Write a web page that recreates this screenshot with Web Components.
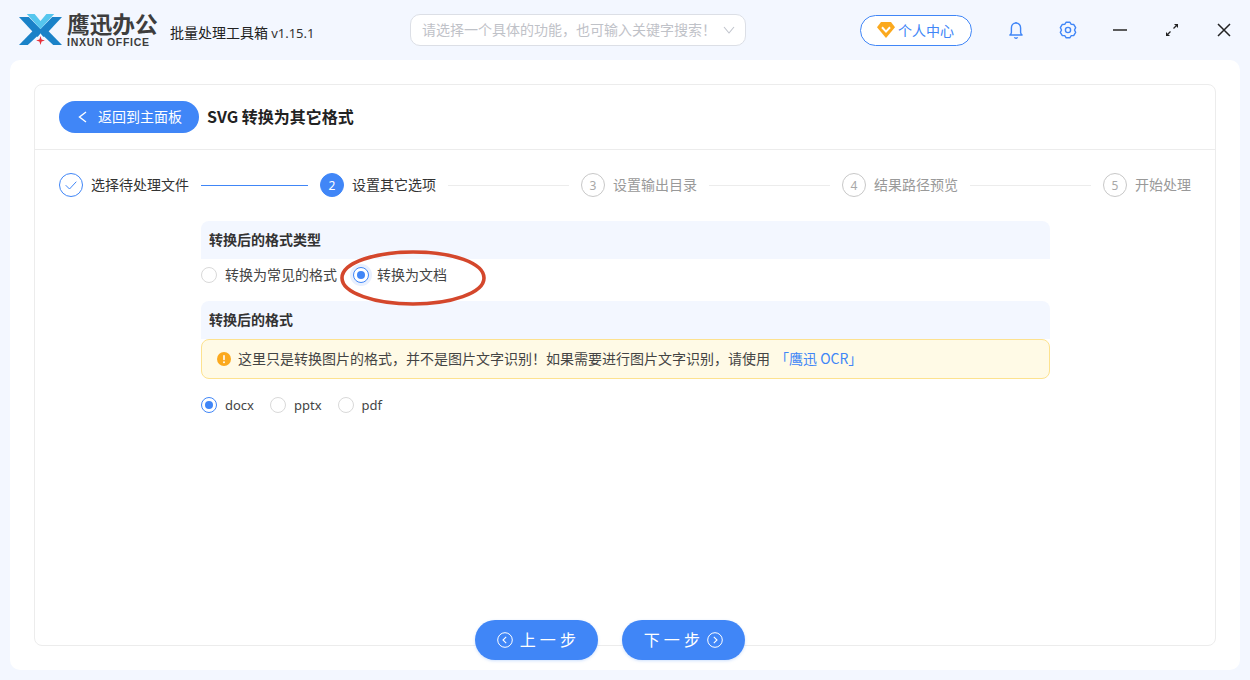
<!DOCTYPE html>
<html lang="zh">
<head>
<meta charset="utf-8">
<title>SVG 转换为其它格式</title>
<style>
  html, body { margin: 0; height: 100%; background: #f3f7ff; overflow: hidden; }
  body { font-family: "Noto Sans CJK SC", "Noto Sans", sans-serif; font-size: 13.5px; color: #333; }
</style>
</head>
<body>
<inxun-app>
  <inxun-titlebar slot="top"></inxun-titlebar>

  <inxun-page-head title-text="SVG 转换为其它格式" back-text="返回到主面板" slot="head"></inxun-page-head>

  <inxun-steps slot="head">
    <inxun-step state="done" label="选择待处理文件"></inxun-step>
    <inxun-step state="active" n="2" label="设置其它选项" line="107"></inxun-step>
    <inxun-step n="3" label="设置输出目录" line="121"></inxun-step>
    <inxun-step n="4" label="结果路径预览" line="121"></inxun-step>
    <inxun-step n="5" label="开始处理" line="121"></inxun-step>
  </inxun-steps>

  <inxun-form>
    <inxun-section-title>转换后的格式类型</inxun-section-title>
    <inxun-radio-row style="height:32px;margin-bottom:10px">
      <inxun-radio cjk>转换为常见的格式</inxun-radio>
      <inxun-radio cjk checked halo>转换为文档</inxun-radio>
      <inxun-ring></inxun-ring>
    </inxun-radio-row>
    <inxun-section-title>转换后的格式</inxun-section-title>
    <inxun-notice>这里只是转换图片的格式，并不是图片文字识别！如果需要进行图片文字识别，请使用<a slot="link">「鹰迅 OCR」</a></inxun-notice>
    <inxun-radio-row style="height:32px;margin-top:10px">
      <inxun-radio checked>docx</inxun-radio>
      <inxun-radio>pptx</inxun-radio>
      <inxun-radio>pdf</inxun-radio>
    </inxun-radio-row>
  </inxun-form>

  <inxun-pill dir="prev" slot="foot">上 一 步</inxun-pill>
  <inxun-pill dir="next" slot="foot">下 一 步</inxun-pill>
</inxun-app>

<script>
// shared blue of the app
const BLUE = '#4086f7';

function shadow(el, html) {
  const t = document.createElement('template');
  t.innerHTML = html;
  el.attachShadow({ mode: 'open' });
  el.shadowRoot.appendChild(t.content.cloneNode(true));
}

// six toothed gear outline, centred on 12,12
function gearPath() {
  const pts = [];
  for (let i = 0; i < 6; i++) {
    const a = i * 60 - 90;
    [[a - 13, 8], [a + 13, 8], [a + 30, 6.5]].forEach(([deg, r]) => {
      const rad = deg * Math.PI / 180;
      pts.push((12 + r * Math.cos(rad)).toFixed(2) + ' ' + (12 + r * Math.sin(rad)).toFixed(2));
    });
  }
  return 'M' + pts.join('L') + 'z';
}

class InxunApp extends HTMLElement {
  constructor() {
    super();
    shadow(this, `
    <style>
    :host { display: flex; flex-direction: column; width: 1250px; height: 680px; }
    .panel {
      flex: 1;
      margin: 0 10px 10px;
      padding: 24px 24px 10px;
      background: #fff;
      border-radius: 10px;
      display: flex;
      flex-direction: column;
      min-height: 0;
    }
    .card {
      flex: 1;
      border: 1px solid #ececec;
      border-radius: 8px;
      box-sizing: border-box;
      min-height: 0;
    }
    .foot {
      position: relative;
      height: 40px;
      margin-top: -26px;
      padding-left: 441px;
      display: flex;
      gap: 24px;
    }
    </style>
    <slot name="top"></slot>
    <div class="panel">
      <div class="card">
        <slot name="head"></slot>
        <slot></slot>
      </div>
      <div class="foot"><slot name="foot"></slot></div>
    </div>`);
  }
}

class InxunTitlebar extends HTMLElement {
  constructor() {
    super();
    shadow(this, `
    <style>
    :host { display: flex; align-items: center; height: 60px; flex: none; position: relative; }
    .logo { margin-left: 18px; width: 45px; height: 34px; flex: none; }
    .brand { margin-left: 4px; width: 95px; display: flex; flex-direction: column; margin-top: 1px; }
    .brand b { font-family: "Liberation Sans", "Noto Sans CJK SC", sans-serif; font-size: 22.7px; line-height: 24px; font-weight: 700; color: #3d3d3d; white-space: nowrap; }
    .brand i { font-style: normal; font-family: "Liberation Sans", sans-serif; font-size: 10.5px; line-height: 12px; margin-top: -1.5px; font-weight: 700; color: #3d3d3d; letter-spacing: 0.72px; white-space: nowrap; }
    .ver { margin-left: 8px; margin-top: 4px; font-size: 14px; color: #222; white-space: nowrap; width: 150px; }
    .ver span { font-family: "Noto Sans", sans-serif; font-size: 13px; color: #333; }
    .search {
      margin-left: 90px;
      width: 336px; height: 32px;
      box-sizing: border-box;
      border: 1px solid #dcdfe6;
      border-radius: 10px;
      background: #fff;
      display: flex; align-items: center;
      padding-left: 11px;
      color: #bfc2c8;
      font-size: 14px;
      white-space: nowrap;
    }
    .search span { margin-bottom: 2px; }
    .search svg { margin-left: 7px; flex: none; }
    .vip {
      margin-left: 114px;
      width: 112px; height: 31px;
      box-sizing: border-box;
      border: 1px solid ${BLUE};
      border-radius: 16px;
      background: #fff;
      display: flex; align-items: center;
      padding-left: 16px; gap: 3px;
      color: ${BLUE};
      font-size: 14px;
      white-space: nowrap;
    }
    .ico { position: absolute; top: 18px; width: 24px; height: 24px; }
    </style>
    <svg class="logo" viewBox="0 0 46 34" preserveAspectRatio="none">
      <path d="M1 4h10l14 14-5 6z" fill="#1a82c8"/>
      <path d="M45 4H35L21 18l5 6z" fill="#1a82c8"/>
      <path d="M9 1h8l6 7 6-7h8L23 16z" fill="#55c6ee"/>
      <path d="M1 32 L17 16l5 5L10 32z" fill="#1a82c8"/>
      <path d="M45 32 L29 16l-5 5L36 32z" fill="#1a82c8"/>
      <path d="M23 23l1.1 3.4 3.4 1.1-3.4 1.1L23 32l-1.1-3.4-3.4-1.1 3.4-1.1z" fill="#e8303a"/>
    </svg>
    <div class="brand"><b>鹰迅办公</b><i>INXUN OFFICE</i></div>
    <div class="ver">批量处理工具箱 <span>v1.15.1</span></div>
    <div class="search"><span>请选择一个具体的功能，也可输入关键字搜索！</span>
      <svg width="12" height="8" viewBox="0 0 12 8"><path d="M1 1l5 6 5-6" fill="none" stroke="#c0c4cc" stroke-width="1.1"/></svg>
    </div>
    <div class="vip">
      <svg width="18" height="16" viewBox="0 0 18 16"><path d="M4 0h10l4 5.3L9 16 0 5.3z" fill="#fba91e"/><path d="M5 5.3 9 9.6l4-4.3" fill="none" stroke="#fff" stroke-width="2"/></svg>
      个人中心
    </div>
    <svg class="ico" style="left:1004px" viewBox="0 0 24 24" fill="none" stroke="${BLUE}" stroke-width="1.4" stroke-linejoin="round"><path d="M12 5c-3 0-4.6 2.4-4.6 5v4.5c0 1-.9 2-1.5 2.5h12.2c-.6-.5-1.5-1.5-1.5-2.5V10c0-2.6-1.6-5-4.6-5z"/><path d="M10.4 19.3a1.8 1.8 0 0 0 3.2 0"/><path d="M12 4v1"/></svg>
    <svg class="ico" style="left:1056px" viewBox="0 0 24 24" fill="none" stroke="${BLUE}" stroke-width="1.4" stroke-linejoin="round"><path d="${gearPath()}"/><circle cx="12" cy="12" r="2.6"/></svg>
    <svg class="ico" style="left:1108px" viewBox="0 0 24 24"><path d="M5 12h14" stroke="#333" stroke-width="1.6"/></svg>
    <svg class="ico" style="left:1160px" viewBox="0 0 24 24" fill="#222"><path d="M13.5 10.5 16 8" stroke="#222" stroke-width="1.3"/><path d="M14 6h4v4z"/><path d="M10.5 13.5 8 16" stroke="#222" stroke-width="1.3"/><path d="M6 14v4h4z"/></svg>
    <svg class="ico" style="left:1212px" viewBox="0 0 24 24"><path d="M6 6l12 12M18 6 6 18" stroke="#222" stroke-width="1.5"/></svg>`);
  }
}

class InxunPageHead extends HTMLElement {
  constructor() {
    super();
    shadow(this, `
    <style>
    :host { display: flex; align-items: center; height: 64px; padding-left: 24px; border-bottom: 1px solid #ececec; }
    .back {
      width: 140px; height: 32px;
      box-sizing: border-box;
      border-radius: 16px;
      background: ${BLUE};
      color: #fff;
      font-size: 14px;
      display: flex; align-items: center;
      padding-left: 19px; gap: 11px;
      white-space: nowrap;
    }
    .back span { margin-bottom: 2px; }
    h1 { margin: 0 0 2px 8px; font-size: 16px; font-weight: 700; color: #222; white-space: nowrap; }
    </style>
    <div class="back">
      <svg width="9" height="12" viewBox="0 0 9 12"><path d="M8 1 1.5 6 8 11" fill="none" stroke="#fff" stroke-width="1.4"/></svg>
      <span id="b"></span>
    </div>
    <h1 id="t"></h1>`);
  }
  connectedCallback() {
    this.shadowRoot.getElementById('b').textContent = this.getAttribute('back-text');
    this.shadowRoot.getElementById('t').textContent = this.getAttribute('title-text');
  }
}

class InxunSteps extends HTMLElement {
  constructor() {
    super();
    shadow(this, `
    <style>
    :host { display: flex; align-items: center; height: 70px; padding: 0 24px; box-sizing: border-box; }
    </style>
    <slot></slot>`);
  }
}

class InxunStep extends HTMLElement {
  constructor() {
    super();
    shadow(this, `
    <style>
    :host { display: contents; }
    .line { height: 1px; min-width: 0; margin: 0 12px; background: #ececec; }
    .circle {
      width: 24px; height: 24px; flex: none;
      box-sizing: border-box;
      border-radius: 50%;
      border: 1px solid #c8c8c8;
      color: #a8a8a8;
      font-family: "Noto Sans", sans-serif;
      font-size: 12px;
      display: flex; align-items: center; justify-content: center;
    }
    .label { margin: 0 0 2px 8px; font-size: 14px; color: #999; white-space: nowrap; }
    :host([state="active"]) .circle { background: ${BLUE}; border-color: ${BLUE}; color: #fff; }
    :host([state="done"]) .circle { border-color: ${BLUE}; }
    :host([state="active"]) .label, :host([state="done"]) .label { color: #333; }
    :host([state="active"]) .line { background: ${BLUE}; }
    </style>
    <div class="line" id="l"></div>
    <div class="circle" id="c"></div>
    <div class="label" id="t"></div>`);
  }
  connectedCallback() {
    const root = this.shadowRoot;
    const line = root.getElementById('l');
    if (this.hasAttribute('line')) line.style.flex = this.getAttribute('line') + ' 1 0';
    else line.remove();
    root.getElementById('t').textContent = this.getAttribute('label');
    const c = root.getElementById('c');
    if (this.getAttribute('state') === 'done') {
      c.innerHTML = '<svg width="12" height="9" viewBox="0 0 12 9"><path d="M.7 4.2l3.8 3.8L11.3.7" fill="none" stroke="' + BLUE + '" stroke-width="1"/></svg>';
    } else {
      c.textContent = this.getAttribute('n');
    }
  }
}

class InxunForm extends HTMLElement {
  constructor() {
    super();
    shadow(this, `
    <style>
    :host { display: block; width: 849px; margin: 1px 0 0 166px; }
    </style>
    <slot></slot>`);
  }
}

class InxunSectionTitle extends HTMLElement {
  constructor() {
    super();
    shadow(this, `
    <style>
    :host {
      display: flex; align-items: center;
      height: 38px;
      box-sizing: border-box;
      padding: 0 0 3px 8px;
      background: #f3f7ff;
      border-radius: 8px 8px 0 0;
      font-size: 14px; font-weight: 700; color: #333;
    }
    </style>
    <slot></slot>`);
  }
}

class InxunRadioRow extends HTMLElement {
  constructor() {
    super();
    shadow(this, `
    <style>
    :host { display: flex; align-items: center; gap: 16px; position: relative; }
    </style>
    <slot></slot>`);
  }
}

class InxunRadio extends HTMLElement {
  constructor() {
    super();
    shadow(this, `
    <style>
    :host { display: inline-flex; align-items: center; gap: 8px; color: #444; white-space: nowrap; }
    .dot {
      width: 16px; height: 16px; flex: none;
      box-sizing: border-box;
      border: 1px solid #d9d9d9;
      border-radius: 50%;
      background: #fff;
      display: flex; align-items: center; justify-content: center;
    }
    :host([checked]) .dot { border-color: ${BLUE}; }
    :host([checked]) .dot::after { content: ""; width: 8px; height: 8px; border-radius: 50%; background: ${BLUE}; }
    :host([halo]) .dot { box-shadow: 0 0 0 3px #e8f0fe; }
    .t { font-family: "Noto Sans", sans-serif; font-size: 13px; }
    :host([cjk]) .t { font-family: "Noto Sans CJK SC", sans-serif; font-size: 14px; margin-bottom: 2px; }
    </style>
    <span class="dot"></span><span class="t"><slot></slot></span>`);
  }
}

// hand drawn red ring lying over the second radio
class InxunRing extends HTMLElement {
  constructor() {
    super();
    shadow(this, `
    <style>
    :host { position: absolute; left: 138px; top: -10px; width: 148px; height: 60px; pointer-events: none; }
    svg { display: block; }
    </style>
    <svg width="148" height="60" viewBox="0 0 148 60">
      <path d="M3 29C3 13 38 3 74 3c40 0 71 11 71 26 0 15-33 26-71 26C36 55 3 44 3 29z" fill="none" stroke="#d4472c" stroke-width="3.6"/>
    </svg>`);
  }
}

class InxunNotice extends HTMLElement {
  constructor() {
    super();
    shadow(this, `
    <style>
    :host {
      display: flex; align-items: center;
      height: 40px;
      box-sizing: border-box;
      padding: 0 0 2px 15px;
      background: #fffae6;
      border: 1px solid #fde28f;
      border-radius: 8px;
      font-size: 14px; color: #444;
      white-space: nowrap;
    }
    svg { flex: none; margin: 2px 7px 0 0; }
    .link { color: ${BLUE}; margin-left: 5px; }
    </style>
    <svg width="14" height="14" viewBox="0 0 14 14"><circle cx="7" cy="7" r="7" fill="#fba91e"/><rect x="6.2" y="3" width="1.6" height="5.2" rx=".8" fill="#fff"/><circle cx="7" cy="10.2" r=".95" fill="#fff"/></svg>
    <slot></slot><span class="link"><slot name="link"></slot></span>`);
  }
}

class InxunPill extends HTMLElement {
  constructor() {
    super();
    shadow(this, `
    <style>
    :host {
      display: flex; align-items: center; justify-content: center; gap: 7px;
      width: 123px; height: 40px;
      border-radius: 20px;
      background: ${BLUE};
      color: #fff;
      font-size: 16px;
      letter-spacing: .3px;
      white-space: nowrap;
      box-shadow: 0 1px 3px rgba(64,134,247,.25);
    }
    .t { margin-bottom: 2px; }
    </style>
    <span id="before"></span><span class="t"><slot></slot></span><span id="after"></span>`);
  }
  connectedCallback() {
    const prev = this.getAttribute('dir') === 'prev';
    const d = prev ? 'M9.2 4.8 6 8l3.2 3.2' : 'M6.8 4.8 10 8l-3.2 3.2';
    const svg = '<svg width="16" height="16" viewBox="0 0 16 16" style="display:block"><circle cx="8" cy="8" r="7.3" fill="none" stroke="#fff" stroke-width="1"/><path d="' + d + '" fill="none" stroke="#fff" stroke-width="1.1"/></svg>';
    this.shadowRoot.getElementById(prev ? 'before' : 'after').innerHTML = svg;
    this.shadowRoot.getElementById(prev ? 'after' : 'before').remove();
  }
}

customElements.define('inxun-app', InxunApp);
customElements.define('inxun-titlebar', InxunTitlebar);
customElements.define('inxun-page-head', InxunPageHead);
customElements.define('inxun-steps', InxunSteps);
customElements.define('inxun-step', InxunStep);
customElements.define('inxun-form', InxunForm);
customElements.define('inxun-section-title', InxunSectionTitle);
customElements.define('inxun-radio-row', InxunRadioRow);
customElements.define('inxun-radio', InxunRadio);
customElements.define('inxun-ring', InxunRing);
customElements.define('inxun-notice', InxunNotice);
customElements.define('inxun-pill', InxunPill);
</script>
</body>
</html>
